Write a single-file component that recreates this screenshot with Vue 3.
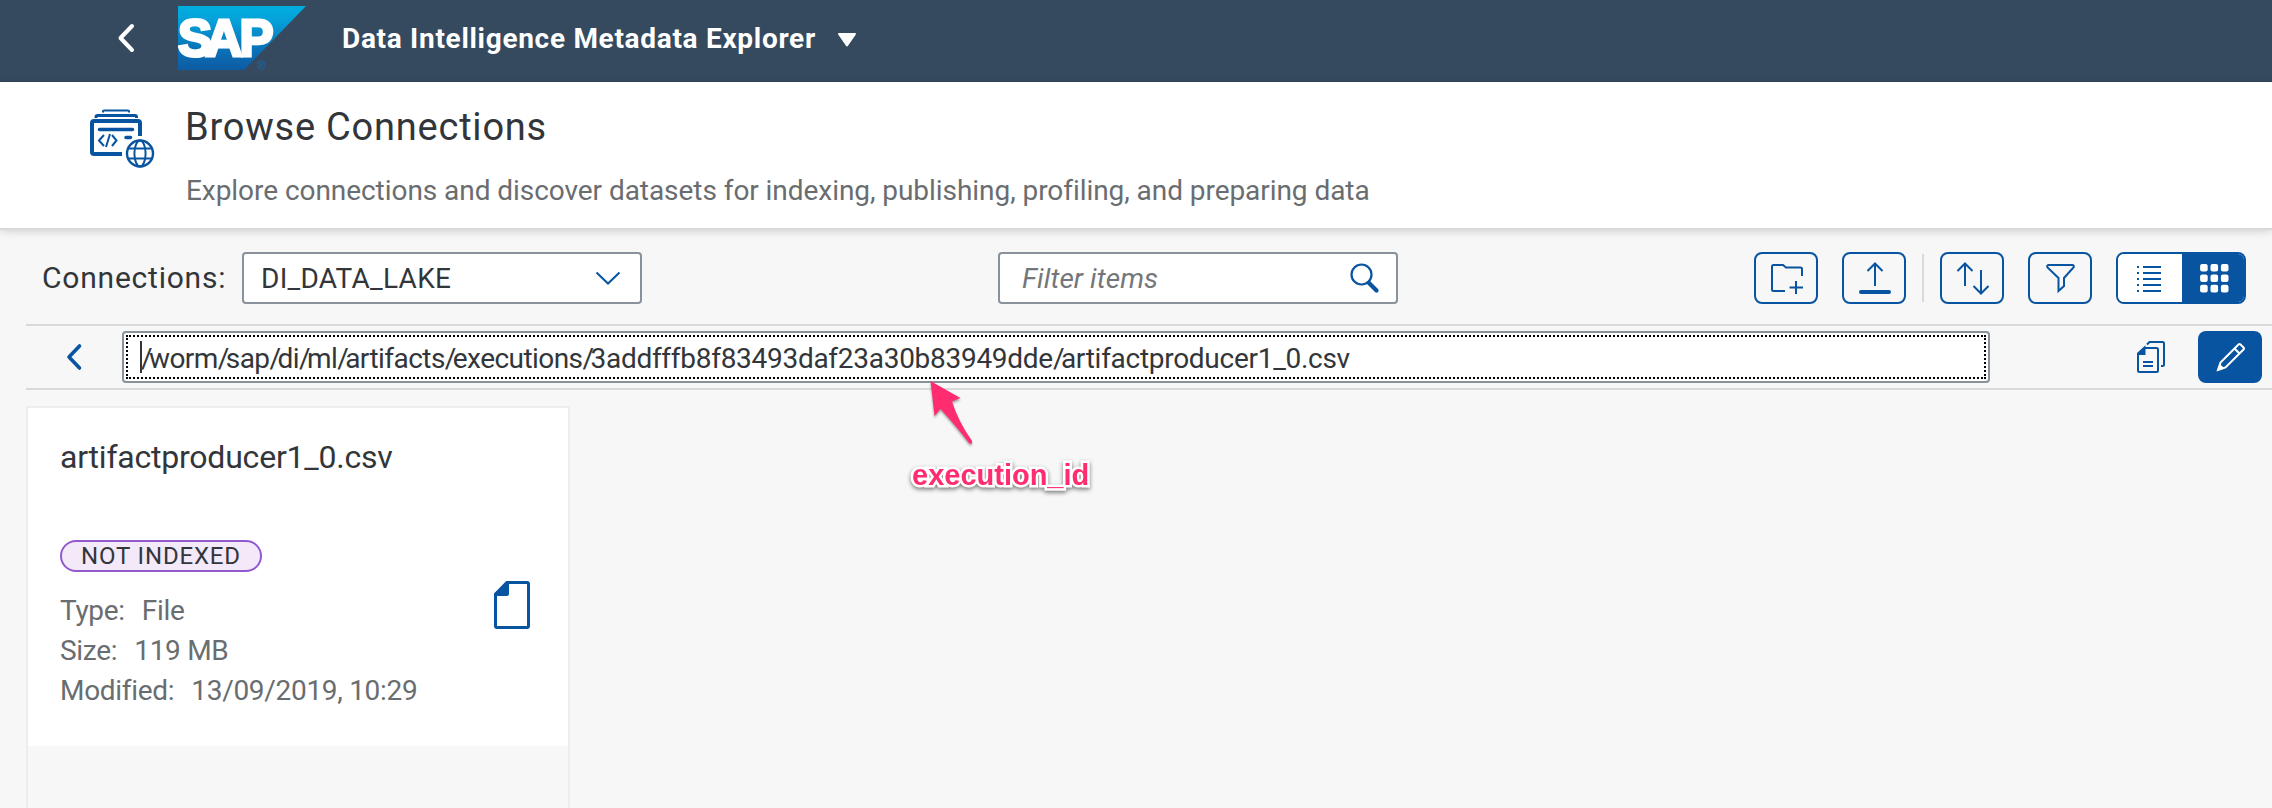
<script setup>
const pathParts = [
  { text: 'worm' },
  { text: 'sap' },
  { text: 'di' },
  { text: 'ml' },
  { text: 'artifacts' },
  { text: 'executions' },
  { text: '3addfffb8f83493daf23a30b83949dde', wide: true },
  { text: 'artifactproducer1_0.csv', wide: true },
]
const card = {
  name: 'artifactproducer1_0.csv',
  status: 'NOT INDEXED',
  fields: [
    { label: 'Type:', value: 'File' },
    { label: 'Size:', value: '119 MB' },
    { label: 'Modified:', value: '13/09/2019, 10:29' },
  ],
}
</script>

<template>
  <div class="app">
    <header class="shell">
      <svg class="shell-back" width="20" height="32" viewBox="0 0 20 32"><path d="M16 4 4.500 16 16 28" /></svg>
      <svg class="logo" width="130" height="66" viewBox="0 0 130 66">
        <defs>
          <linearGradient id="sapBlue" x1="0" y1="0" x2="0" y2="1">
            <stop offset="0" stop-color="#00aee0" />
            <stop offset="0.25" stop-color="#069fd8" />
            <stop offset="0.65" stop-color="#0a74b9" />
            <stop offset="1" stop-color="#0e5ba4" />
          </linearGradient>
        </defs>
        <path d="M0 0H128L66 64H0Z" fill="url(#sapBlue)" />
        <text class="logo-text" x="0 27.500 61.500" y="50">SAP</text>
        <text class="logo-reg" x="79" y="64">®</text>
      </svg>
      <span class="shell-title">Data Intelligence Metadata Explorer</span>
      <svg class="caret" width="20" height="14" viewBox="0 0 20 14"><path d="M2 1H18L10 12.500Z" /></svg>
    </header>

    <section class="page-head">
      <svg class="page-icon" width="66" height="60" viewBox="0 0 66 60">
        <path d="M13 3.500V2.500Q13 1.500 14 1.500H38Q39 1.500 39 2.500V3.500" stroke-width="2" />
        <path d="M6 9V8Q6 6.500 7.500 6.500H45Q46.500 6.500 46.500 8V9" stroke-width="3" />
        <path d="M32 45H4Q2 45 2 43V14Q2 12 4 12H48Q50 12 50 14V27" stroke-width="4" />
        <path d="M9.500 20.500H42.500M36 28.500H40.500" stroke-width="3.500" stroke-linecap="round" />
        <path d="M14 26 9 31.500 14 37M22 26 26.500 31.500 22 37M20 25 16 38" stroke-width="2" />
        <circle cx="50" cy="44.500" r="13" stroke-width="2.400" />
        <ellipse cx="50" cy="44.500" rx="5.600" ry="13" stroke-width="2" />
        <path d="M39 39.500H61M39 49.500H61" stroke-width="2" />
      </svg>
      <div>
        <h1 class="page-title">Browse Connections</h1>
        <p class="page-sub">Explore connections and discover datasets for indexing, publishing, profiling, and preparing data</p>
      </div>
    </section>

    <main class="content">
      <div class="toolbar">
        <label class="conn-label">Connections:</label>
        <div class="select">
          <span>DI_DATA_LAKE</span>
          <svg width="28" height="16" viewBox="0 0 28 16"><path d="M2.500 2.500 14 13.500 25.500 2.500" /></svg>
        </div>
        <div class="filter">
          <span>Filter items</span>
          <svg width="32" height="32" viewBox="0 0 32 32"><circle cx="12.500" cy="12.500" r="10" stroke-width="2.200" /><path d="M20 21 27.500 28.500" stroke-width="4.200" stroke-linecap="round" /></svg>
        </div>
        <div class="actions">
          <button class="btn"><svg width="64" height="52" viewBox="0 0 64 52"><path d="M31 39H19.500Q18 39 18 37.500V14.500Q18 13 19.500 13H29L32 15.500H46.500Q48 15.500 48 17V24M42 29V42M35.500 35.500H49" /></svg></button>
          <button class="btn"><svg width="64" height="52" viewBox="0 0 64 52"><path d="M33 34V12M25.500 19 33 11.500 40.500 19" /><path d="M19 40H47" stroke-width="4" stroke-linecap="round" /></svg></button>
          <i class="divider"></i>
          <button class="btn"><svg width="64" height="52" viewBox="0 0 64 52"><path d="M25 34V12M17.500 19 25 11.500 32.500 19M41 18V40.500M33.500 34 41 41.500 48.500 34" /></svg></button>
          <button class="btn"><svg width="64" height="52" viewBox="0 0 64 52"><path d="M20.500 13H44.500Q46.500 13.500 45.500 15.500L36 26V34L30.500 39V26L19.500 15.500Q18.500 13.500 20.500 13Z" /></svg></button>
          <div class="segmented">
            <button class="seg"><svg width="64" height="52" viewBox="0 0 64 52"><path d="M27 15H45M27 21H45M27 27H45M27 33H45M27 39H45M21 15H23M21 21H23M21 27H23M21 33H23M21 39H23" /></svg></button>
            <button class="seg on"><svg width="64" height="52" viewBox="0 0 64 52"><g fill="#fff" stroke="none"><template v-for="r in 3" :key="r"><rect v-for="c in 3" :key="c" :x="7.700 + c * 10.400" :y="1.600 + r * 10.400" width="7.600" height="7.600" rx="2" /></template></g></svg></button>
          </div>
        </div>
      </div>

      <div class="path-row">
        <svg class="path-back" width="20" height="28" viewBox="0 0 20 28"><path d="M15.500 3 5 14 15.500 25" /></svg>
        <div class="path-input"><div class="focus"><i class="cursor"></i><span class="path-text"><template v-for="p in pathParts" :key="p.text"><span class="slash">/</span><span class="part" :class="{ wide: p.wide }">{{ p.text }}</span></template></span></div></div>
        <svg class="copy" width="28" height="32" viewBox="0 0 28 32">
          <path d="M10 3.500 12.500 1H25.500Q27 1 27 2.500V23.500Q27 25 25.500 25H24" />
          <path d="M8 7H19.500Q21 7 21 8.500V29.500Q21 31 19.500 31H2.500Q1 31 1 29.500V13Z" />
          <path d="M0.500 13 7.500 6.500V13Z" fill="#0854a0" />
          <path d="M6 21H16M6 25H16" />
        </svg>
        <button class="edit"><svg width="64" height="52" viewBox="0 0 64 52"><path d="M20 39 22.500 31.500 40.500 13.500Q41.500 12.500 42.500 13.500L45.500 16.500Q46.500 17.500 45.500 18.500L27.500 36.500ZM36.500 17.500 41.500 22.500" /><path d="M19 40 21.500 32.500 26.500 37.500Z" fill="#fff" stroke="none" /></svg></button>
      </div>

      <article class="card">
        <div class="card-body">
          <h2 class="card-title">{{ card.name }}</h2>
          <span class="badge">{{ card.status }}</span>
          <div class="card-info">
            <dl class="fields">
              <div v-for="f in card.fields" :key="f.label" class="field"><dt>{{ f.label }}</dt><dd>{{ f.value }}</dd></div>
            </dl>
            <svg class="file" width="36" height="48" viewBox="0 0 36 48"><path d="M13 1.500H33Q34.500 1.500 34.500 3V45Q34.500 46.500 33 46.500H3Q1.500 46.500 1.500 45V13Z" /><path d="M0 13 12.500 0H15V12.500Q15 15 12.500 15H0Z" fill="#0854a0" stroke="none" /></svg>
          </div>
        </div>
      </article>
    </main>

    <div class="note">
      <svg width="60" height="76" viewBox="0 0 60 76"><path d="M4.500 3 34.500 20 26 23.500Q32 43 46 63Q46.500 67 43 65Q31 49 14.500 31L8.500 38Z" /></svg>
      <span class="note-text">execution_id</span>
    </div>
  </div>
</template>

<style>
body { background: #f7f7f7; overflow: hidden; }
</style>

<style scoped>
.app { position: relative; width: 2272px; height: 808px; overflow: hidden; background: #f7f7f7; color: #32363a; font-family: Roboto, "Liberation Sans", sans-serif; font-size: 28px; display: flex; flex-direction: column; }
svg { display: block; flex: none; fill: none; stroke: #0854a0; stroke-width: 2; }
button { margin: 0; padding: 0; border: 0; background: none; display: flex; }
span, label, dt, dd { white-space: nowrap; }

.shell { flex: none; height: 82px; background: #354a5f; display: flex; align-items: center; box-sizing: border-box; padding: 0 0 6px 116px; }
.shell-back { stroke: #fff; stroke-width: 4; stroke-linecap: round; stroke-linejoin: round; }
.logo { margin-left: 42px; stroke: none; margin-top: 2px; }
.logo-text { font: bold 51px "Liberation Sans", sans-serif; fill: #fff; stroke: #fff; stroke-width: 3px; }
.logo-reg { font: 12px "Liberation Sans", sans-serif; fill: #1b66a8; }
.shell-title { margin-left: 34px; width: 475px; font-weight: 700; letter-spacing: .7px; color: #fff; }
.caret { margin-left: 20px; margin-top: 4px; fill: #fff; stroke: #fff; stroke-linejoin: round; }

.page-head { flex: none; position: relative; height: 146px; background: #fff; box-sizing: border-box; padding: 21px 0 0 90px; display: flex; box-shadow: 0 2px 0 #d9d9d9, 0 2px 10px rgba(0, 0, 0, .2); }
.page-icon { margin: 6px 29px 0 0; }
.page-title { margin: 0 0 20px; font-size: 38px; line-height: 48px; font-weight: 400; letter-spacing: .78px; }
.page-sub { margin: 0 0 0 1px; line-height: 40px; letter-spacing: -.055px; color: #6a6d70; }

.content { flex: 1; padding-left: 26px; display: flex; flex-direction: column; }
.toolbar { flex: none; height: 96px; padding: 24px 26px 0 16px; box-sizing: border-box; display: flex; }
.conn-label { width: 200px; font-size: 30px; line-height: 51px; letter-spacing: .78px; }
.select, .filter { box-sizing: border-box; width: 400px; height: 52px; background: #fff; border: 2px solid #89919a; border-radius: 4px; display: flex; align-items: center; justify-content: space-between; }
.select { padding: 0 18px 0 17px; letter-spacing: .28px; }
.filter { margin-left: 356px; padding: 0 15px 0 22px; color: #74777a; font-style: italic; letter-spacing: .07px; }
.actions { margin-left: auto; display: flex; }
.btn { box-sizing: border-box; width: 64px; height: 52px; border: 2px solid #0854a0; border-radius: 8px; margin-right: 24px; }
.btn svg, .seg svg { margin: -2px; }
.divider { width: 2px; height: 48px; margin: 2px 16px 0 -8px; background: #d9d9d9; }
.segmented { display: flex; box-sizing: border-box; width: 130px; height: 52px; border: 2px solid #0854a0; border-radius: 8px; overflow: hidden; }
.seg { flex: none; width: 64px; background: #fff; }
.seg.on { background: #0854a0; }
.seg.on svg { margin-left: 0; }

.path-row { flex: none; height: 66px; box-sizing: border-box; border-top: 2px solid #d9d9d9; border-bottom: 2px solid #d9d9d9; padding: 0 10px 0 38px; display: flex; align-items: center; }
.path-back { stroke-width: 3.6; stroke-linecap: round; stroke-linejoin: round; }
.path-input { margin-left: 38px; box-sizing: border-box; width: 1868px; height: 52px; padding: 2px; background: #fff; border: 2px solid #89919a; border-radius: 4px; }
.focus { height: 40px; border: 2px dotted #000; display: flex; align-items: center; padding-left: 12px; }
.cursor { width: 2px; height: 32px; background: #32363a; margin-right: -1px; }
.path-text { padding-top: 2px; }
.slash { letter-spacing: -3.6px; }
.part { letter-spacing: -.55px; }
.part.wide { letter-spacing: -.28px; }
.copy { margin-left: 147px; }
.edit { margin-left: auto; background: #0854a0; border-radius: 8px; width: 64px; height: 52px; }
.edit svg { stroke: #fff; }

.card { flex: 1; margin-top: 16px; width: 544px; box-sizing: border-box; border: 2px solid #ededed; border-bottom: 0; }
.card-body { height: 338px; box-sizing: border-box; padding: 29px 38px 0 32px; background: #fff; }
.card-title { margin: 0 0 63px; font-size: 32px; line-height: 40px; font-weight: 400; letter-spacing: -.22px; }
.badge { display: flex; align-items: center; justify-content: center; width: 202px; height: 32px; box-sizing: border-box; border: 2px solid #925ace; border-radius: 16px; background: #f3e9f9; font-size: 24px; letter-spacing: .85px; }
.card-info { display: flex; justify-content: space-between; margin-top: 19px; color: #6a6d70; letter-spacing: -.3px; }
.fields { margin: 0; }
.field { display: flex; line-height: 40px; }
.field dd { margin: 0 0 0 17px; }
.file { margin-top: -10px; stroke-width: 3; }

.note { position: absolute; left: 912px; top: 378px; }
.note svg { margin-left: 14px; fill: #ff2d6f; stroke: none; filter: drop-shadow(0 2px 1px rgba(0, 0, 0, .35)); }
.note-text { display: block; font: bold 29px/34px "Liberation Sans", sans-serif; color: #ff2d6f; -webkit-text-stroke: 5px #fff; paint-order: stroke fill; filter: drop-shadow(0 2px 2px rgba(0, 0, 0, .5)); margin-top: 4px; width: max-content; }
</style>
